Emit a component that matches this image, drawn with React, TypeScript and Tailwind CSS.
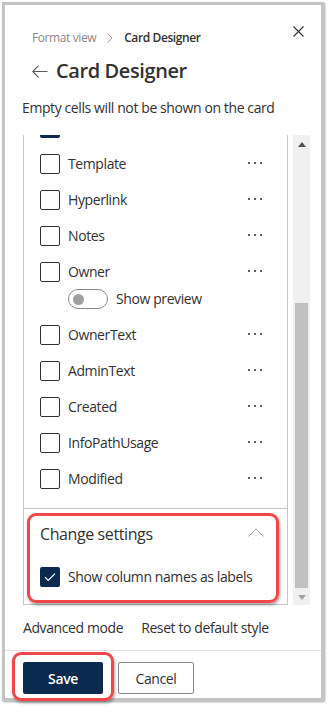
import React from "react";

const FONT = '"Open Sans", "Noto Sans", Arial, sans-serif';

function Dots() {
  return (
    <svg width="16" height="4" viewBox="0 0 16 4" className="-mt-[3px]">
      <rect x="1" y="1" width="2" height="2" fill="#605e5c" />
      <rect x="7" y="1" width="2" height="2" fill="#605e5c" />
      <rect x="13" y="1" width="2" height="2" fill="#605e5c" />
    </svg>
  );
}

function Box() {
  return <div className="w-[20px] h-[20px] shrink-0 border border-[#323130] rounded-[2px] bg-white" />;
}

function Row({ label }: { label: string }) {
  return (
    <div className="h-[36px] flex items-center pl-[16px] pr-[24px]">
      <Box />
      <span className="ml-[8px] text-[14px] leading-[20px] text-[#323130] flex-1">{label}</span>
      <Dots />
    </div>
  );
}

export default function App() {
  return (
    <div className="relative w-[328px] h-[706px] bg-white overflow-hidden tracking-[-0.025em]" style={{ fontFamily: FONT }}>
      <div className="ml-[2px] mt-[2px] w-[322px] h-[699px] border-[3px] border-[#c4c4c4] shadow-[1px_1px_2px_rgba(0,0,0,0.35)] flex flex-col bg-white">
        {/* header */}
        <div className="flex justify-between pl-[27px] pr-[17px]">
          <div className="mt-[25px] flex items-center text-[12px] leading-[16px]">
            <span className="text-[#8a8886]">Format view</span>
            <svg width="6" height="10" viewBox="0 0 6 10" className="mx-[11px]">
              <path d="M0.5 0.5 L5 5 L0.5 9.5" fill="none" stroke="#a19f9d" strokeWidth="1" />
            </svg>
            <span className="text-[#323130] font-semibold">Card Designer</span>
          </div>
          <svg width="11" height="11" viewBox="0 0 11 11" className="mt-[21px]">
            <path d="M0.5 0.5 L10.5 10.5 M10.5 0.5 L0.5 10.5" stroke="#323130" strokeWidth="1.1" />
          </svg>
        </div>

        <div className="mt-[11px] h-[28px] flex items-center pl-[27px]">
          <svg width="16" height="13" viewBox="0 0 16 13">
            <path d="M15.5 6.5 H1 M6.5 0.7 L0.8 6.5 L6.5 12.3" fill="none" stroke="#605e5c" strokeWidth="1.1" />
          </svg>
          <span className="ml-[8px] text-[20px] leading-[28px] font-semibold text-[#323130]">Card Designer</span>
        </div>

        <div className="mt-[13px] pl-[17px] text-[14px] leading-[20px] text-[#323130]">
          Empty cells will not be shown on the card
        </div>

        {/* list area */}
        <div className="mt-[17px] flex pl-[18px] h-[470px]">
          <div className="w-[265px] h-full border-l border-r border-b border-[#c8c6c4] flex flex-col overflow-hidden">
            <div className="pl-[16px]">
              <div className="w-[20px] h-[3px] bg-[#0b2a4f] rounded-b-[2px]" />
            </div>
            <div className="h-[8px]" />
            <Row label="Template" />
            <Row label="Hyperlink" />
            <Row label="Notes" />
            <Row label="Owner" />
            <div className="-mt-px h-[28px] pl-[44px] flex items-start">
              <div className="w-[40px] h-[20px] rounded-full border border-[#8a8886] flex items-center pl-[4px]">
                <div className="w-[11px] h-[11px] rounded-full bg-[#a19f9d]" />
              </div>
              <span className="ml-[8px] text-[14px] leading-[20px] text-[#323130]">Show preview</span>
            </div>
            <Row label="OwnerText" />
            <Row label="AdminText" />
            <Row label="Created" />
            <Row label="InfoPathUsage" />
            <Row label="Modified" />
            <div className="h-[11px]" />
            <div className="h-px bg-[#c8c6c4]" />
            <div className="pt-[14px] pl-[16px] pr-[23px] flex items-center justify-between">
              <span className="text-[16px] leading-[22px] text-[#323130]">Change settings</span>
              <svg width="16" height="9" viewBox="0 0 16 9" className="-mt-[4px]">
                <path d="M0.5 8.5 L8 1 L15.5 8.5" fill="none" stroke="#a19f9d" strokeWidth="1" />
              </svg>
            </div>
            <div className="mt-[22px] pl-[16px] flex items-center">
              <div className="w-[20px] h-[20px] rounded-[2px] bg-[#0b2a4f] flex items-center justify-center">
                <svg width="12" height="10" viewBox="0 0 12 10">
                  <path d="M1 5.2 L4.2 8.4 L11 1.6" fill="none" stroke="#ffffff" strokeWidth="1.2" />
                </svg>
              </div>
              <span className="ml-[8px] text-[14px] leading-[20px] text-[#323130]">Show column names as labels</span>
            </div>
          </div>
          {/* scrollbar */}
          <div className="ml-[5px] w-[17px] h-full bg-[#f0f0f0] flex flex-col items-center">
            <svg width="8" height="5" viewBox="0 0 8 5" className="mt-[7px]">
              <path d="M0 5 L4 0 L8 5 Z" fill="#505050" />
            </svg>
            <div className="mt-[156px] w-[13px] h-[285px] bg-[#c1c1c1]" />
            <svg width="8" height="5" viewBox="0 0 8 5" className="mt-[7px]">
              <path d="M0 0 L8 0 L4 5 Z" fill="#a3a3a3" />
            </svg>
          </div>
        </div>

        <div className="mt-[13px] pl-[18px] flex gap-[18px] text-[14px] leading-[20px] text-[#323130]">
          <span>Advanced mode</span>
          <span>Reset to default style</span>
        </div>

        <div className="mt-[12px] h-px bg-[#e1dfdd]" />

        <div className="mt-[11px] pl-[18px] flex gap-[15px]">
          <button className="w-[80px] h-[32px] rounded-[2px] bg-[#0b2a4f] text-white text-[14px] font-semibold">Save</button>
          <button className="w-[76px] h-[32px] rounded-[2px] border border-[#8a8886] bg-white text-[#323130] text-[14px]">Cancel</button>
        </div>
      </div>

      {/* annotation highlights */}
      <div className="absolute left-[27px] top-[513px] w-[252px] h-[90px] rounded-[9px] border-[3px] border-[#f04848] shadow-[1px_2px_3px_rgba(0,0,0,0.35)]" />
      <div className="absolute left-[12px] top-[652px] w-[102px] h-[49px] rounded-[9px] border-[3px] border-[#f04848] shadow-[1px_2px_3px_rgba(0,0,0,0.35)]" />
    </div>
  );
}
